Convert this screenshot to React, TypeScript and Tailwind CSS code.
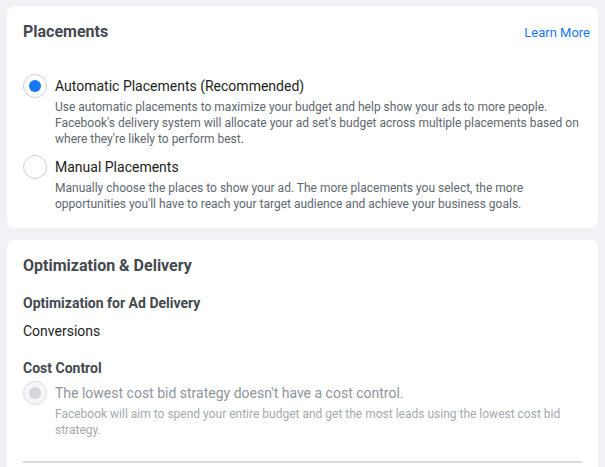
import React from "react";

function Radio({ checked, disabled }: { checked?: boolean; disabled?: boolean }) {
  if (disabled) {
    return (
      <span className="flex h-6 w-6 shrink-0 items-center justify-center rounded-full border border-[#dadde1] bg-[#f5f6f7]">
        <span className="h-3 w-3 rounded-full bg-[#d3d6db]" />
      </span>
    );
  }
  return (
    <span className="flex h-6 w-6 shrink-0 items-center justify-center rounded-full border border-[#ccd0d5] bg-white">
      {checked && <span className="h-3 w-3 rounded-full bg-[#1877f2]" />}
    </span>
  );
}

function Option({
  label,
  desc,
  checked,
  disabled,
}: {
  label: string;
  desc: string;
  checked?: boolean;
  disabled?: boolean;
}) {
  return (
    <div className="flex gap-2">
      <div className="-mt-0.5">
        <Radio checked={checked} disabled={disabled} />
      </div>
      <div>
        <div
          className={`text-[14px] leading-5 ${disabled ? "text-[#90949c]" : "text-[#1c1e21]"}`}
        >
          {label}
        </div>
        <p
          className={`mt-[3px] text-[12px] leading-4 ${disabled ? "text-[#a5a9af]" : "text-[#606770]"}`}
        >
          {desc}
        </p>
      </div>
    </div>
  );
}

export default function App() {
  return (
    <div
      className="flex min-h-[467px] flex-col gap-3 bg-[#f0f2f5] px-[7px] pt-[6px]"
      style={{ fontFamily: "Roboto, 'Liberation Sans', Arial, sans-serif" }}
    >
      {/* Placements */}
      <section className="rounded-lg bg-white pb-4 pl-4 pr-2 pt-[15px]">
        <div className="flex items-center justify-between">
          <h2 className="text-[16px] font-bold leading-5 text-[#444950]">Placements</h2>
          <a className="mt-0.5 text-[13px] leading-5 text-[#1877f2]" href="#">
            Learn More
          </a>
        </div>
        <div className="mt-[33px] flex flex-col gap-[10px] pr-2">
          <Option
            checked
            label="Automatic Placements (Recommended)"
            desc="Use automatic placements to maximize your budget and help show your ads to more people. Facebook's delivery system will allocate your ad set's budget across multiple placements based on where they're likely to perform best."
          />
          <Option
            label="Manual Placements"
            desc="Manually choose the places to show your ad. The more placements you select, the more opportunities you'll have to reach your target audience and achieve your business goals."
          />
        </div>
      </section>

      {/* Optimization & Delivery */}
      <section className="flex-1 rounded-t-lg bg-white px-4 pt-4">
        <h2 className="text-[16px] font-bold leading-5 text-[#444950]">Optimization &amp; Delivery</h2>
        <h3 className="mt-[17px] text-[14px] font-bold leading-5 text-[#444950]">
          Optimization for Ad Delivery
        </h3>
        <div className="mt-2 text-[14px] leading-5 text-[#1c1e21]">Conversions</div>
        <h3 className="mt-[17px] text-[14px] font-bold leading-5 text-[#444950]">Cost Control</h3>
        <div className="mt-[5px]">
          <Option
            disabled
            label="The lowest cost bid strategy doesn't have a cost control."
            desc="Facebook will aim to spend your entire budget and get the most leads using the lowest cost bid strategy."
          />
        </div>
        <div className="mt-[23px] h-0.5 bg-[#dadde1]" />
      </section>
    </div>
  );
}
